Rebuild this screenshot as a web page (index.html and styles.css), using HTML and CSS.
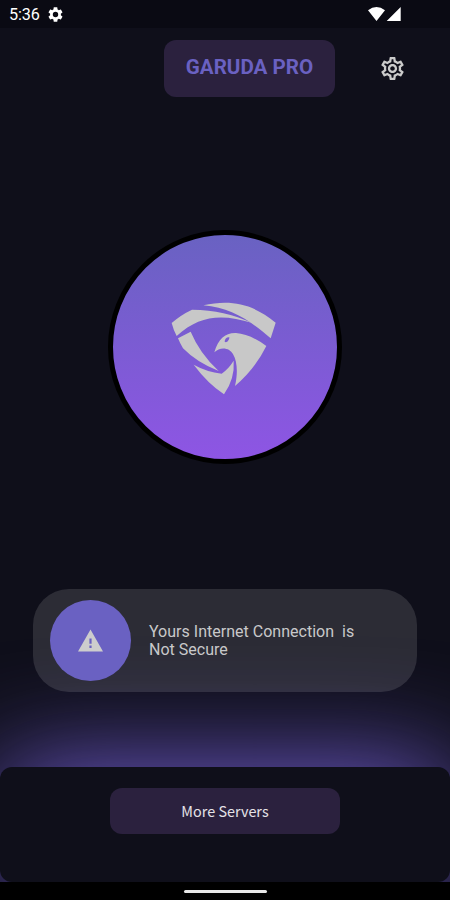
FILE: index.html
```html
<!DOCTYPE html>
<html lang="en">
<head>
<meta charset="utf-8">
<title>Garuda Pro</title>
<link rel="stylesheet" href="styles.css">
</head>
<body>
<div class="screen">
  <div class="status">
    <span class="time">5:36</span>
    <svg class="status-gear" viewBox="2 2 20 20"><path fill-rule="evenodd" d="M19.14 12.94c.04-.3.06-.61.06-.94 0-.32-.02-.64-.07-.94l2.03-1.58c.18-.14.23-.41.12-.61l-1.92-3.32c-.12-.22-.37-.29-.59-.22l-2.39.96c-.5-.38-1.03-.7-1.62-.94l-.36-2.54c-.04-.24-.24-.41-.48-.41h-3.84c-.24 0-.43.17-.47.41l-.36 2.54c-.59.24-1.13.57-1.62.94l-2.39-.96c-.22-.08-.47 0-.59.22L2.74 8.87c-.12.21-.08.47.12.61l2.03 1.58c-.05.3-.09.63-.09.94s.02.64.07.94l-2.03 1.58c-.18.14-.23.41-.12.61l1.92 3.32c.12.22.37.29.59.22l2.39-.96c.5.38 1.03.7 1.62.94l.36 2.54c.05.24.24.41.48.41h3.84c.24 0 .44-.17.47-.41l.36-2.54c.59-.24 1.13-.56 1.62-.94l2.39.96c.22.08.47 0 .59-.22l1.92-3.32c.12-.22.07-.47-.12-.61zM12 15.6a3.6 3.6 0 1 1 0-7.2 3.6 3.6 0 0 1 0 7.2z"/></svg>
    <svg class="signals" viewBox="0 0 34 15"><path d="M0 3.3Q8.5-3.3 17 3.3L8.5 14.1zM32.7 0V14H18.7z"/></svg>
  </div>
  <header class="header">
    <h1 class="brand">GARUDA PRO</h1>
    <svg class="settings" viewBox="2 2 20 20"><path d="M19.43 12.98c.04-.32.07-.64.07-.98 0-.34-.03-.66-.07-.98l2.11-1.65c.19-.15.24-.42.12-.64l-2-3.46c-.09-.16-.26-.25-.44-.25-.06 0-.12.01-.17.03l-2.49 1c-.52-.4-1.08-.73-1.69-.98l-.38-2.65C14.46 2.18 14.25 2 14 2h-4c-.25 0-.46.18-.49.42l-.38 2.65c-.61.25-1.17.59-1.69.98l-2.49-1c-.06-.02-.12-.03-.18-.03-.17 0-.34.09-.43.25l-2 3.46c-.13.22-.07.49.12.64l2.11 1.65c-.04.32-.07.65-.07.98 0 .33.03.66.07.98l-2.11 1.65c-.19.15-.24.42-.12.64l2 3.46c.09.16.26.25.44.25.06 0 .12-.01.17-.03l2.49-1c.52.4 1.08.73 1.69.98l.38 2.65c.03.24.24.42.49.42h4c.25 0 .46-.18.49-.42l.38-2.65c.61-.25 1.17-.59 1.69-.98l2.49 1c.06.02.12.03.18.03.17 0 .34-.09.43-.25l2-3.46c.12-.22.07-.49-.12-.64l-2.11-1.65zm-1.98-1.71c.04.31.05.52.05.73 0 .21-.02.43-.05.73l-.14 1.13.89.7 1.08.84-.7 1.21-1.27-.51-1.04-.42-.9.68c-.43.32-.84.56-1.25.73l-1.06.43-.16 1.13-.2 1.35h-1.4l-.19-1.35-.16-1.13-1.06-.43c-.43-.18-.83-.41-1.23-.71l-.91-.7-1.06.43-1.27.51-.7-1.21 1.08-.84.89-.7-.14-1.13c-.03-.31-.05-.54-.05-.74s.02-.43.05-.73l.14-1.13-.89-.7-1.08-.84.7-1.21 1.27.51 1.04.42.9-.68c.43-.32.84-.56 1.25-.73l1.06-.43.16-1.13.2-1.35h1.39l.19 1.35.16 1.13 1.06.43c.43.18.83.41 1.23.71l.91.7 1.06-.43 1.27-.51.7 1.21-1.07.85-.89.7.14 1.13zM12 8c-2.21 0-4 1.79-4 4s1.79 4 4 4 4-1.79 4-4-1.79-4-4-4zm0 6c-1.1 0-2-.9-2-2s.9-2 2-2 2 .9 2 2-.9 2-2 2z"/></svg>
  </header>
  <main class="main">
    <div class="connect">
      <svg class="logo" viewBox="0 0 390 345">
        <path d="M130 46C210 29 276 39 347 98L332 145C270 91 215 54 130 46Z"/>
        <path d="M35 99Q62 75 96 59C165 60 218 72 277 99C186 71 119 75 50 138Q40 119 35 99Z"/>
        <path d="M54 145L92 125Q119 190 176 243Q111 218 69 175Q60 160 54 145Z"/>
        <path d="M101 224Q141 246 185 251Q206 236 221 212Q225 266 192 313Q143 280 101 224Z"/>
        <path fill-rule="evenodd" d="M163 187C175 147 195 128 228 129Q270 132 319 168Q284 239 225 288C235 245 230 211 220 194C209 172 180 170 163 187ZM194 155C200 160 208 151 208 142C201 140 194 147 194 155Z"/>
      </svg>
    </div>
  </main>
  <section class="notice">
    <div class="badge"><svg class="warning" viewBox="0 0 26 24"><path fill-rule="evenodd" d="M12.5 .5L25 22.5H0ZM11.4 9.5V14.7H13.6V9.5ZM11.4 16.6V19H13.6V16.6Z"/></svg></div>
    <p class="message">Yours Internet Connection&nbsp; is<br>Not Secure</p>
  </section>
  <footer class="sheet">
    <button class="servers">More Servers</button>
  </footer>
  <div class="nav"><div class="handle"></div></div>
</div>
</body>
</html>
```
FILE: styles.css
```css
* { box-sizing: border-box; }
body { margin: 0; background: #0f0f1a; font-family: Roboto, sans-serif; }
.screen { display: flex; flex-direction: column; width: 450px; height: 900px; overflow: hidden; background: #0f0f1a; }
.status { display: flex; align-items: center; height: 28px; padding: 0 49px 0 9px; background: #0a0a13; color: #fff; }
.time { width: 39px; font-size: 16.2px; line-height: 28px; letter-spacing: -.1px; padding-top: 1px; }
.status-gear { width: 15px; height: 15px; fill: #fff; }
.signals { width: 34px; height: 15px; margin-left: auto; margin-right: -1px; fill: #fff; }
.header { display: flex; align-items: center; height: 57px; margin-top: 12px; padding-left: 164px; }
.brand { width: 171px; height: 57px; margin: 0; border-radius: 12px; background: #2b213e; color: #6a61c2; font-size: 20.6px; line-height: 55px; font-weight: 700; text-align: center; }
.settings { width: 23px; height: 23px; margin-left: 46px; fill: #cbcbcb; }
.main { display: flex; justify-content: center; height: 492px; padding-top: 133px; }
.connect { display: flex; align-items: center; justify-content: center; width: 234px; height: 234px; border: 5px solid #000; border-radius: 50%; background: linear-gradient(#6962c2, #8e55e4); }
.logo { width: 130px; height: 115px; fill: #c8c8c8; }
.notice { position: relative; z-index: 1; display: flex; align-items: center; width: 384px; height: 103px; margin-left: 33px; padding-left: 17px; border-radius: 36px; background: rgba(255, 255, 255, .12); }
.badge { display: flex; align-items: center; justify-content: center; width: 81px; height: 81px; border-radius: 50%; background: #6a61c2; }
.warning { width: 26px; height: 24px; fill: #cdcdcd; }
.message { margin: 0 0 0 18px; color: #c8c8ca; font-size: 16.05px; line-height: 18px; }
.sheet { display: flex; justify-content: center; height: 115px; margin-top: 75px; padding-top: 21px; border-radius: 12px; background: #0f0f1a; box-shadow: 0 0 110px #7660d8; }
.servers { width: 230px; height: 46px; padding: 0 0 1px; border: 0; border-radius: 12px; background: #2b213e; color: #e5e3e8; font: 14.4px "Noto Sans CJK SC", sans-serif; }
.nav { position: relative; display: flex; justify-content: center; height: 18px; padding-top: 8px; background: #000; }
.handle { width: 83px; height: 3px; border-radius: 2px; background: #e8e8e8; }
```
